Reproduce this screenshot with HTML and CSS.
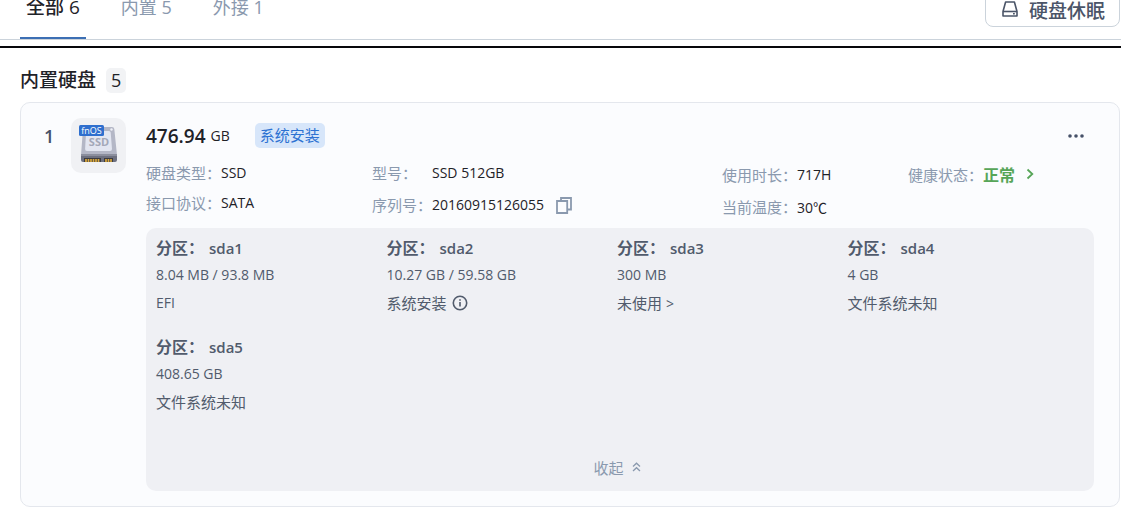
FILE: index.html
```html
<!DOCTYPE html>
<html lang="zh-CN">
  <head>
    <meta charset="utf-8" />
    <title>硬盘</title>
    <meta name="viewport" content="width=device-width, initial-scale=1" />
    <link rel="stylesheet" href="styles.css">
  </head>

  <body>
    <header class="topbar">
      <nav class="tabs">
        <a href="#" class="tab active">全部 6</a>
        <a href="#" class="tab">内置 5</a>
        <a href="#" class="tab">外接 1</a>
      </nav>
      <button class="sleep-btn" type="button">
        <svg width="18" height="18" viewBox="0 0 18 18" fill="none" stroke="currentColor" stroke-width="1.6" stroke-linejoin="round">
          <path d="M4.600 1h8.800L16 10.500V15H2v-4.500z" />
          <path d="M2 10.500h14" />
          <path d="M12 12.800h1.800" />
        </svg>
        硬盘休眠
      </button>
    </header>

    <main class="content">
      <h2 class="section-title">内置硬盘 <span class="count">5</span></h2>

      <section class="disk">
        <div class="disk-index">1</div>
        <div class="disk-icon">
          <svg width="55" height="55" viewBox="0 0 55 55">
            <path d="M14 9h27q2 0 2.300 2L46 37H10l2-26q0-2 2-2z" fill="#b4b7c6" />
            <path d="M17 13h21q1.500 0 1.700 1.500L41 31q0 2-2 2H16q-2 0-1.900-2L15 15q0-2 2-2z" fill="#e3e6f1" />
            <circle cx="40.500" cy="11.500" r="1.200" fill="#eef0f6" />
            <path d="M10 36h36v6q0 2-2 2H12q-2 0-2-2z" fill="#6d7080" />
            <path d="M10 36h36v2H10z" fill="#8b8e9d" />
            <path d="M13 40h17v4H13zM33 40h9v4h-9z" fill="#3c3b40" />
            <path d="M15 41v3M17.500 41v3M20 41v3M22.500 41v3M25 41v3M27.500 41v3M35 41v3M37.500 41v3M40 41v3" stroke="#d9a83c" stroke-width="1.700" />
            <text class="icon-type" x="28" y="28" text-anchor="middle">SSD</text>
            <rect x="8" y="7" width="25" height="11" rx="1.500" fill="#2f6fce" />
            <text class="icon-os" x="20.500" y="15.500" text-anchor="middle">fnOS</text>
          </svg>
        </div>

        <div class="disk-body">
          <div class="disk-head">
            <span class="size">476.94</span>
            <span class="unit">GB</span>
            <span class="tag">系统安装</span>
            <button class="more" type="button" aria-label="更多">
              <svg width="16" height="4" viewBox="0 0 16 4" fill="currentColor">
                <circle cx="2" cy="2" r="1.800" />
                <circle cx="8" cy="2" r="1.800" />
                <circle cx="14" cy="2" r="1.800" />
              </svg>
            </button>
          </div>

          <div class="info">
            <div class="info-col">
              <div class="info-row"><span class="label">硬盘类型：</span><span>SSD</span></div>
              <div class="info-row"><span class="label">接口协议：</span><span>SATA</span></div>
            </div>
            <div class="info-col">
              <div class="info-row"><span class="label">型号：</span><span>SSD 512GB</span></div>
              <div class="info-row roomy">
                <span class="label">序列号：</span><span>20160915126055</span>
                <button class="copy" type="button" aria-label="复制">
                  <svg width="16" height="18" viewBox="0 0 16 18" fill="none" stroke="currentColor" stroke-width="1.800">
                    <path d="M5 4.500V2h10v11.500h-3.500" />
                    <path d="M1 5h10.200v12H1z" />
                  </svg>
                </button>
              </div>
            </div>
            <div class="info-col low">
              <div class="info-row"><span class="label">使用时长：</span><span>717H</span></div>
              <div class="info-row roomy"><span class="label">当前温度：</span><span>30℃</span></div>
            </div>
            <div class="info-col low">
              <div class="info-row">
                <span class="label">健康状态：</span>
                <a href="#" class="status">正常
                  <svg width="8" height="12" viewBox="0 0 8 12" fill="none" stroke="currentColor" stroke-width="1.800">
                    <path d="M1.500 1.500L6.300 6l-4.800 4.500" />
                  </svg>
                </a>
              </div>
            </div>
          </div>

          <div class="partitions">
            <div class="partition-grid">
              <div class="partition">
                <h3><span class="part-label">分区：</span>sda1</h3>
                <p>8.04 MB / 93.8 MB</p>
                <p>EFI</p>
              </div>
              <div class="partition">
                <h3><span class="part-label">分区：</span>sda2</h3>
                <p>10.27 GB / 59.58 GB</p>
                <p class="zh with-icon">系统安装
                  <svg width="16" height="16" viewBox="0 0 16 16" fill="none" stroke="currentColor" stroke-width="1.600">
                    <circle cx="8" cy="8" r="6.700" />
                    <path d="M8 7v4.500M8 4.300v1.500" />
                  </svg>
                </p>
              </div>
              <div class="partition">
                <h3><span class="part-label">分区：</span>sda3</h3>
                <p>300 MB</p>
                <p class="zh">未使用 <span class="arrow">&gt;</span></p>
              </div>
              <div class="partition">
                <h3><span class="part-label">分区：</span>sda4</h3>
                <p>4 GB</p>
                <p class="zh">文件系统未知</p>
              </div>
              <div class="partition">
                <h3><span class="part-label">分区：</span>sda5</h3>
                <p>408.65 GB</p>
                <p class="zh">文件系统未知</p>
              </div>
            </div>
            <button class="collapse" type="button">
              收起
              <svg width="9" height="10" viewBox="0 0 9 10" fill="none" stroke="currentColor" stroke-width="1.300">
                <path d="M1 4.500l3.500-3.300L8 4.500M1 9l3.500-3.300L8 9" />
              </svg>
            </button>
          </div>
        </div>
      </section>
    </main>
  </body>
</html>
```
FILE: styles.css
```css
* {
    box-sizing: border-box;
}

body {
    margin: 0;
    overflow: hidden;
    background-color: #fff;
    color: #1f2228;
    font-family: 'Open Sans', 'Noto Sans CJK SC', sans-serif;
    font-size: 14px;
}

button {
    padding: 0;
    border: none;
    background: none;
    color: inherit;
    font-family: inherit;
    cursor: pointer;
}

a {
    color: inherit;
    text-decoration: none;
}

h2,
h3,
p {
    margin: 0;
}

svg {
    display: block;
    flex: none;
}

/* Top bar, scrolled partly out of view */
.topbar {
    display: flex;
    justify-content: space-between;
    height: 60px;
    margin-top: -20px;
    padding: 0 1px 0 20px;
    border-bottom: 1px solid #cbd3db;
}

.tabs {
    display: flex;
    gap: 29px;
}

.tab {
    padding: 14px 6px 0;
    border-bottom: 2px solid transparent;
    color: #8a99ae;
    font-size: 18px;
    line-height: 26px;
}

.tab.active {
    border-color: #3c6fb4;
    color: #1f2228;
    font-size: 19px;
    font-weight: 500;
}

.sleep-btn {
    display: flex;
    align-items: center;
    gap: 10px;
    height: 36px;
    margin-top: 11px;
    padding: 2px 14px 0 15px;
    border: 1px solid #cbd3db;
    border-radius: 8px;
    color: #4b5568;
    font-size: 19px;
    font-weight: 500;
}

.content {
    margin-top: 6px;
    padding: 20px 1px 0 20px;
    border-top: 2px solid #08080c;
}

.section-title {
    display: flex;
    align-items: center;
    gap: 10px;
    font-size: 19px;
    font-weight: 500;
    line-height: 25px;
}

.count {
    padding: 0 5px;
    border-radius: 5px;
    background-color: #f2f3f5;
    font-size: 18px;
}

/* Disk card */
.disk {
    display: flex;
    margin-top: 9px;
    padding: 15px 25px 15px 23px;
    border: 1px solid #e4e7ed;
    border-radius: 10px;
    background-color: #fbfcfe;
}

.disk-index {
    width: 27px;
    color: #465168;
    font-size: 18px;
    font-weight: 600;
    line-height: 37px;
}

.disk-icon {
    flex: none;
    width: 55px;
    height: 55px;
    margin-right: 20px;
    border-radius: 10px;
    background-color: #f0f1f4;
}

.icon-type {
    fill: #a4a8b8;
    font-size: 11px;
    font-weight: 700;
}

.icon-os {
    fill: #fff;
    font-size: 9px;
}

.disk-body {
    flex: 1;
}

.disk-head {
    display: flex;
    align-items: center;
    height: 35px;
}

.size {
    margin-right: 5px;
    font-size: 19px;
    font-weight: 600;
}

.tag {
    margin-left: 25px;
    padding: 0 5px;
    border-radius: 5px;
    background-color: #d7e6fa;
    color: #2d72d2;
    font-size: 15px;
    line-height: 25px;
}

.more {
    margin-left: auto;
    padding: 10px;
    color: #465168;
}

.info {
    display: grid;
    grid-template-columns: 226fr 350fr 186fr 186fr;
    height: 75px;
    padding-top: 4px;
}

.info-row {
    display: flex;
    align-items: center;
    height: 30px;
}

.info-row.roomy {
    height: 35px;
}

.low {
    padding-top: 2px;
}

.label {
    min-width: 60px;
    color: #8a99ae;
    font-size: 15px;
}

.copy {
    margin-left: 12px;
    color: #8a99ae;
}

.status {
    display: flex;
    align-items: center;
    gap: 11px;
    color: #57a558;
    font-size: 16px;
    font-weight: 700;
}

/* Partition list */
.partitions {
    padding: 7px 16px 12px 10px;
    border-radius: 10px;
    background-color: #eff0f4;
    color: #515b6c;
}

.partition-grid {
    display: grid;
    grid-template-columns: repeat(4, 1fr);
    row-gap: 17px;
}

.partition h3 {
    font-size: 15px;
    font-weight: 600;
    line-height: 26px;
}

.part-label {
    margin-right: 5px;
    font-size: 16px;
}

.partition p {
    height: 28px;
    line-height: 28px;
}

.partition .zh {
    font-size: 15px;
}

.with-icon {
    display: flex;
    align-items: center;
    gap: 5px;
}

.arrow {
    font-size: 14px;
}

.collapse {
    display: flex;
    align-items: center;
    gap: 8px;
    height: 24px;
    margin: 39px auto 0;
    color: #8a99ae;
    font-size: 15px;
}
```
